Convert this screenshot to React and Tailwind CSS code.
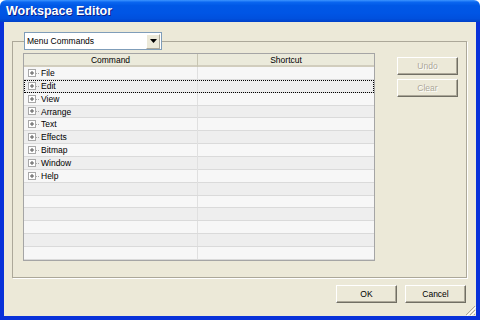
import React from 'react';

const rows = ['File', 'Edit', 'View', 'Arrange', 'Text', 'Effects', 'Bitmap', 'Window', 'Help', '', '', '', '', '', ''];

const Expander = () => (
  <svg width="12" height="9" viewBox="0 0 12 9" className="shrink-0">
    <rect x="0.5" y="0.5" width="7" height="7" fill="#fff" stroke="#A8A8A8" />
    <path d="M2 4h4M4 2v4" stroke="#555" strokeWidth="1" />
    <path d="M8 4.5h4" stroke="#A8A8A8" strokeDasharray="1 1" />
  </svg>
);

const Btn = ({ children, disabled }) => (
  <button
    type="button"
    className={`h-[18px] w-[61px] bg-[#ECE9D8] border border-t-white border-l-white border-r-[#716F64] border-b-[#716F64] shadow-[inset_-1px_-1px_0_#ACA899] text-[8.5px] leading-none ${
      disabled ? 'text-[#ACA899] [text-shadow:1px_1px_0_#fff]' : 'text-black'
    }`}
  >
    {children}
  </button>
);

export default function App() {
  return (
    <div className="w-[480px] h-[320px] flex flex-col bg-white font-['Liberation_Sans',Arial,sans-serif] text-[8.5px] text-black select-none">
      {/* Title bar */}
      <div className="h-[22px] shrink-0 rounded-t-[6px] flex items-center pl-[6px] bg-[linear-gradient(to_bottom,#3D95FF_0%,#0A66F0_10%,#0058E6_25%,#0055E5_60%,#0050DD_85%,#0040C8_100%)]">
        <span className="text-white font-bold text-[12.5px] [text-shadow:1px_1px_0_#0A1E8A]">Workspace Editor</span>
      </div>

      {/* Client */}
      <div className="relative flex-1 flex flex-col bg-[#ECE9D8] border-x-4 border-b-4 border-[#0831D9]">
        <fieldset className="mt-[10px] ml-[8px] mr-[9px] border border-[#ACA899] shadow-[1px_1px_0_#fff]">
          <legend className="ml-[11px] p-0">
            <div className="w-[138px] h-[18px] flex items-center bg-white border border-[#7F9DB9]">
              <span className="pl-[2px] flex-1">Menu Commands</span>
              <div className="w-[14px] h-[15px] mr-[1px] flex items-center justify-center bg-[#ECE9D8] border border-t-white border-l-white border-r-[#ACA899] border-b-[#ACA899]">
                <svg width="7" height="4" viewBox="0 0 7 4">
                  <path d="M0 0h7L3.5 4z" fill="#000" />
                </svg>
              </div>
            </div>
          </legend>

          <div className="flex pt-[3px] pl-[10px] pr-[8px] pb-[16px]">
            {/* List */}
            <div className="w-[352px] border border-[#A5A5A5] bg-white">
              <div className="h-[13px] grid grid-cols-[174px_1fr] bg-[#EBEADB] border-b-2 border-[#D1CDBD]">
                <div className="flex items-center justify-center border-r border-[#C7C5B2]">Command</div>
                <div className="flex items-center justify-center">Shortcut</div>
              </div>
              {rows.map((name, i) => (
                <div
                  key={i}
                  className={`h-[12.87px] grid grid-cols-[174px_1fr] border-b border-[#DADADA] ${
                    i % 2 === 0 ? 'bg-[#F7F7F7]' : 'bg-[#EEEEEE]'
                  } ${i === 1 ? 'outline outline-1 outline-dotted outline-black -outline-offset-1' : ''}`}
                >
                  <div className="flex items-center pl-[4px] gap-[1px] border-r border-[#E0E0E0]">
                    {name && <Expander />}
                    {name && <span>{name}</span>}
                  </div>
                  <div />
                </div>
              ))}
            </div>

            {/* Side buttons */}
            <div className="ml-auto mt-[4px] flex flex-col gap-[4px]">
              <Btn disabled>Undo</Btn>
              <Btn disabled>Clear</Btn>
            </div>
          </div>
        </fieldset>

        <div className="mt-[7px] mr-[10px] flex justify-end gap-[8px]">
          <Btn>OK</Btn>
          <Btn>Cancel</Btn>
        </div>

        {/* Resize grip */}
        <svg width="11" height="11" viewBox="0 0 11 11" className="absolute right-0 bottom-0">
          <path d="M10 1L1 10M10 5L5 10M10 9L9 10" stroke="#ACA899" />
          <path d="M11 2L2 11M11 6L6 11" stroke="#fff" />
        </svg>
      </div>
    </div>
  );
}
